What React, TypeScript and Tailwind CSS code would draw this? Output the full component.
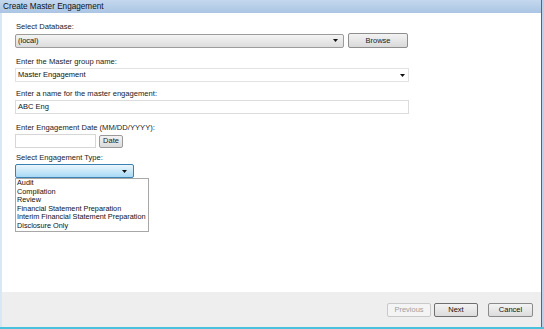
const Arrow = () => (
  <svg width="5" height="3" viewBox="0 0 5 3" className="shrink-0">
    <path d="M0 0 H5 L2.5 3 Z" fill="#111" />
  </svg>
);

const items = [
  "Audit",
  "Compilation",
  "Review",
  "Financial Statement Preparation",
  "Interim Financial Statement Preparation",
  "Disclosure Only",
];

const Label = ({ children }: { children: string }) => (
  <div className="h-[10px] leading-[10px] text-[7.6px] text-[#222] pl-[1px]">{children}</div>
);

export default function App() {
  return (
    <div className="w-[544px] h-[329px] flex flex-col overflow-hidden bg-white font-['Liberation_Sans',Arial,sans-serif]">
      {/* title bar */}
      <div className="h-[13px] flex">
        <div className="flex-1 bg-gradient-to-b from-[#c4d8ee] to-[#aac5e3] text-[8.2px] leading-[13px] pl-[3px] text-[#111]">
          Create Master Engagement
        </div>
        <div className="w-[1px] bg-[#3b7087]" />
        <div className="w-[2px] bg-[#b9d2ec]" />
      </div>

      <div className="flex-1 flex">
        <div className="w-[2px] bg-[#d8e7f6]" />
        <div className="flex-1 flex flex-col">
          {/* form */}
          <div className="flex-1 bg-white pl-[13px] pt-[9px] flex flex-col">
            <div className="flex flex-col gap-[1px]">
              <Label>Select Database:</Label>
              <div className="flex items-center gap-[4px]">
                <div className="w-[329px] h-[14px] border border-[#9c9c9c] rounded-[2px] bg-gradient-to-b from-[#f4f4f4] to-[#dcdcdc] flex items-center justify-between pl-[2px] pr-[5px] text-[7.5px] text-[#111]">
                  <span>(local)</span>
                  <Arrow />
                </div>
                <button className="w-[60px] h-[15px] border border-[#8e8e8e] rounded-[2px] bg-gradient-to-b from-[#f3f3f3] to-[#d9d9d9] text-[7.5px] text-[#222] leading-none">
                  Browse
                </button>
              </div>
            </div>

            <div className="flex flex-col gap-[1px] mt-[9px]">
              <Label>Enter the Master group name:</Label>
              <div className="w-[394px] h-[14px] border border-[#e2e2e2] bg-white flex items-center justify-between pl-[2px] pr-[3px] text-[7.5px] text-[#111]">
                <span>Master Engagement</span>
                <Arrow />
              </div>
            </div>

            <div className="flex flex-col gap-[1px] mt-[7px]">
              <Label>Enter a name for the master engagement:</Label>
              <div className="w-[394px] h-[14px] border border-[#dcdcdc] bg-white flex items-center pl-[2px] text-[7.5px] text-[#111]">
                ABC Eng
              </div>
            </div>

            <div className="flex flex-col gap-[1px] mt-[9px]">
              <Label>Enter Engagement Date (MM/DD/YYYY):</Label>
              <div className="flex items-center gap-[3px]">
                <div className="w-[81px] h-[14px] border border-[#d6d6d6] bg-white" />
                <button className="w-[24px] h-[13px] border border-[#9a9a9a] rounded-[2px] bg-gradient-to-b from-[#f3f3f3] to-[#dadada] text-[7.5px] text-[#222] leading-none">
                  Date
                </button>
              </div>
            </div>

            <div className="flex flex-col gap-[1px] mt-[5px]">
              <Label>Select Engagement Type:</Label>
              <div className="w-[119px] h-[14px] border border-[#3c7fb1] rounded-[2px] bg-gradient-to-b from-[#eaf6fd] to-[#a7d9f5] flex items-center justify-end pr-[6px]">
                <Arrow />
              </div>
              <div className="-mt-[1px] w-[134px] border border-[#a7a7a7] bg-white pl-[1px]">
                {items.map((it) => (
                  <div key={it} className="h-[8.6px] leading-[8.6px] text-[7.3px] text-[#111]">
                    {it}
                  </div>
                ))}
              </div>
            </div>
          </div>

          {/* footer */}
          <div className="h-[35px] bg-[#eeeeee] flex items-center justify-end pr-[8px] pt-[1px]">
            <button className="w-[44px] h-[14px] border border-[#c9c9c9] rounded-[2px] bg-[#f4f4f4] text-[7.5px] text-[#a0a0a0] leading-none">
              Previous
            </button>
            <button className="ml-[3px] w-[44px] h-[14px] border border-[#6f6f6f] rounded-[2px] bg-gradient-to-b from-[#f3f3f3] to-[#dcdcdc] text-[7.5px] text-[#111] leading-none">
              Next
            </button>
            <button className="ml-[10px] w-[45px] h-[14px] border border-[#8a8a8a] rounded-[2px] bg-gradient-to-b from-[#f3f3f3] to-[#dcdcdc] text-[7.5px] text-[#111] leading-none">
              Cancel
            </button>
          </div>
        </div>
        <div className="w-[1px] bg-[#3b7087]" />
        <div className="w-[2px] bg-[#b9d2ec]" />
      </div>
      <div className="h-[2px] bg-[#48c2dc]" />
    </div>
  );
}
